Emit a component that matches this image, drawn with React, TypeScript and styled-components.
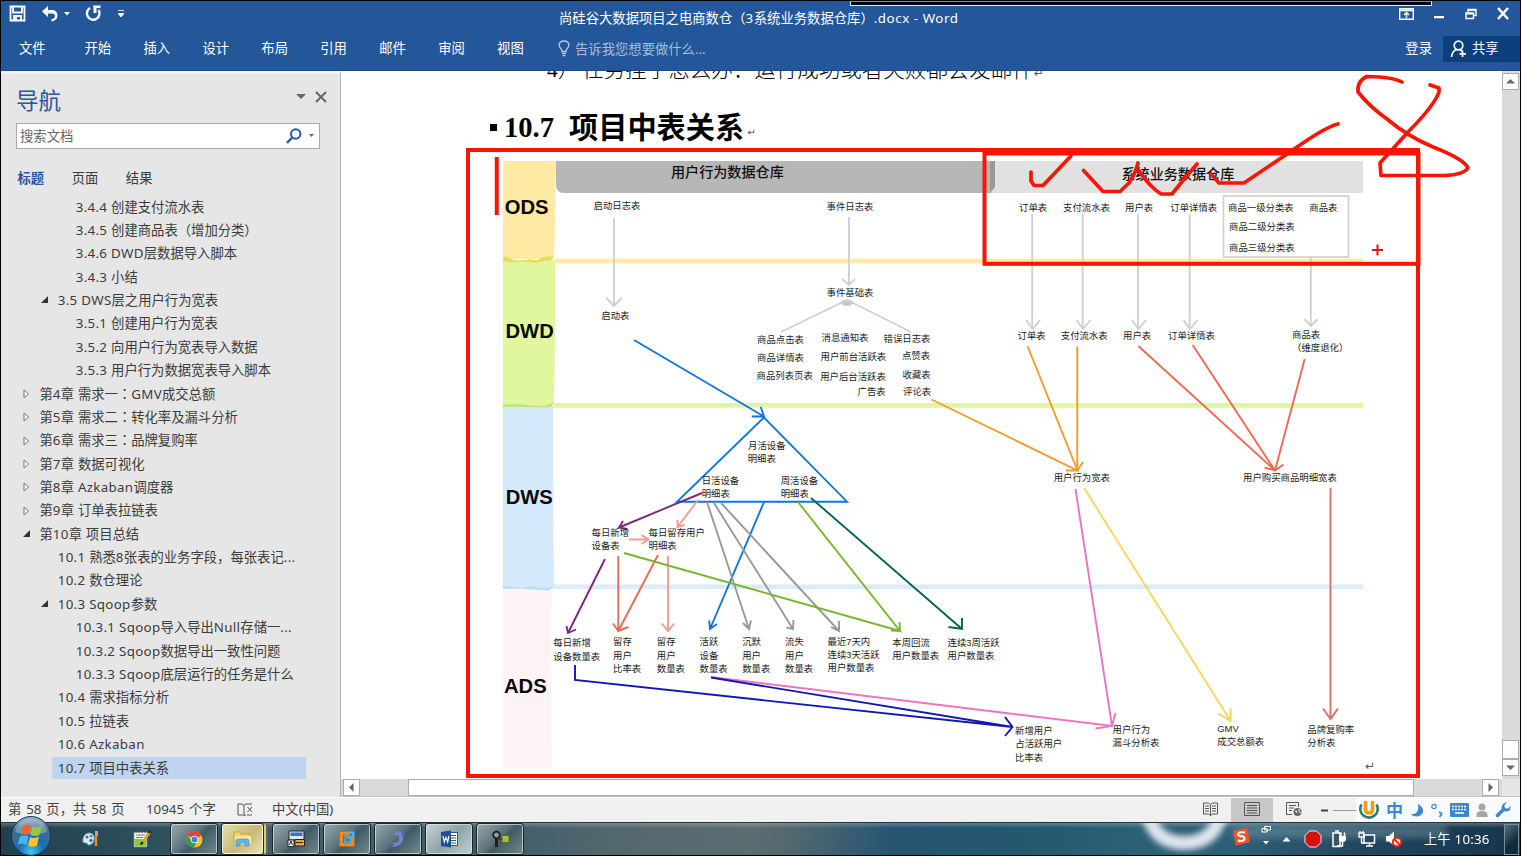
import React from "react";
import styled, { createGlobalStyle, css } from "styled-components";

const UI = `"Noto Sans", "Noto Sans CJK SC", sans-serif`;

const Global = createGlobalStyle`
  * { box-sizing: border-box; }
  body { margin: 0; overflow: hidden; background: #000; }
  svg { display: block; flex: none; }
`;

/* ---------- window ---------- */
const Screen = styled.div`
  width: 1521px;
  height: 856px;
  padding: 1px;
  background: #000;
  display: flex;
  flex-direction: column;
  font-family: ${UI};
  font-size: 13.33px;
  line-height: 20px;
  color: #3c3c3c;
  white-space: nowrap;
  overflow: hidden;
`;

const Header = styled.header`
  position: relative;
  height: 70px;
  flex: none;
  background: #245799;
  border-bottom: 1px solid #1d4a86;
  color: #fff;
`;

const TitleBar = styled.div`
  height: 34px;
  display: grid;
  grid-template-columns: 558px 1fr auto;
`;

const QuickAccess = styled.div`
  display: flex;
  align-items: center;
  height: 25px;
  padding-left: 8px;
`;

const Gap = styled.span<{ $w: number }>`
  display: inline-block;
  width: ${(p) => p.$w}px;
  flex: none;
`;

const DocTitle = styled.div`
  padding-top: 7px;
`;

const WindowButtons = styled.div`
  display: flex;
  align-items: center;
  height: 25px;
  padding-right: 10px;
`;

const ShareStrip = styled.div`
  position: absolute;
  left: 849px;
  top: 0;
  width: 582px;
  height: 5px;
  background: #05051a;
  border: 1px solid #e4ecf7;
  border-top-color: #6f8dbb;
`;

const Ribbon = styled.nav`
  display: flex;
  align-items: center;
  height: 27px;
  padding-left: 18px;
`;

const RibbonTab = styled.span<{ $first?: boolean }>`
  width: ${(p) => (p.$first ? 65.5 : 58.95)}px;
  flex: none;
  padding-bottom: 1px;
`;

const TellMe = styled.span`
  display: flex;
  align-items: center;
  gap: 5px;
  color: #a3bbde;
  margin-left: 2px;
  flex: 1;
`;

const SignIn = styled.span`
  padding-bottom: 1px;
`;

const Share = styled.span`
  display: flex;
  align-items: center;
  gap: 4px;
  width: 77px;
  height: 26px;
  margin-left: 11px;
  padding-left: 7px;
  background: #0c3f7c;
`;

/* ---------- body ---------- */
const Body = styled.div`
  display: flex;
  height: 726px;
  flex: none;
  background: #fff;
`;

const NavPane = styled.aside`
  width: 340px;
  flex: none;
  background: #e6e6e6;
  border-top: 3px solid #f1f2f5;
  border-right: 1px solid #b4b4b4;
`;

const NavHead = styled.div`
  display: flex;
  align-items: center;
  height: 50px;
  padding: 4px 13px 0 15px;
`;

const NavTitle = styled.h2`
  margin: 0;
  flex: 1;
  font-size: 22.5px;
  font-weight: 400;
  line-height: 30px;
  color: #2b579a;
`;

const SearchBox = styled.div`
  display: flex;
  align-items: center;
  width: 304px;
  height: 26px;
  margin: -1px 0 0 15px;
  padding: 0 5px 0 3px;
  border: 1px solid #ababab;
  background: #fff;
  color: #666;
`;

const SearchText = styled.span`
  flex: 1;
`;

const NavTabs = styled.div`
  display: flex;
  gap: 27.5px;
  height: 46px;
  padding: 19px 0 0 16.5px;
`;

const NavTab = styled.span<{ $on?: boolean }>`
  font-weight: ${(p) => (p.$on ? 700 : 400)};
  color: ${(p) => (p.$on ? "#2b579a" : "#3c3c3c")};
`;

const Outline = styled.ul`
  margin: 0;
  padding: 0;
  list-style: none;
`;

const OutlineRow = styled.li<{ $level: number; $on?: boolean }>`
  display: flex;
  align-items: center;
  width: 254px;
  height: 23.36px;
  margin-left: 51px;
  line-height: 22px;
  padding-left: ${(p) => [0, 5.7, 23.7][p.$level - 1]}px;
  ${(p) => p.$level === 1 && "margin-left: 38.5px;"}
  ${(p) =>
    p.$on &&
    css`
      background: #bfd4f0;
      height: 22px;
      margin-top: 1px;
    `}
  position: relative;
`;

const Marker = styled.svg<{ $level: number }>`
  position: absolute;
  left: ${(p) => (p.$level === 1 ? -18 : -12)}px;
  top: 7px;
`;

const WideColon = styled.span`
  font-family: "Noto Sans CJK TC", sans-serif;
`;

const LatinRun = styled.span<{ $track: number }>`
  letter-spacing: ${(p) => p.$track}px;
`;

const Main = styled.main`
  flex: 1;
  display: grid;
  grid-template-columns: 1161px 18px;
  grid-template-rows: 708px 18px;
`;

const Doc = styled.article`
  position: relative;
  overflow: hidden;
  color: #000;
`;

const CutLine = styled.p`
  margin: -16px 0 0;
  padding-left: 206px;
  height: 56px;
  font: 300 21.5px/30px "Liberation Serif", "Noto Sans CJK SC", serif;
`;

const Return = styled.span<{ $size: number; $drop?: number }>`
  font: 400 ${(p) => p.$size}px "DejaVu Sans", sans-serif;
  color: #555;
  padding-top: ${(p) => p.$drop ?? 0}px;
`;

const Heading = styled.h1`
  display: flex;
  align-items: center;
  height: 40px;
  margin: 0;
  padding: 0 0 7px 149px;
  font: 700 28.6px/36px "Liberation Serif", "Noto Sans CJK SC", serif;
`;

const Bullet = styled.i`
  width: 7px;
  height: 7px;
  margin-right: 7px;
  background: #000;
`;

const HeadingText = styled.span`
  margin: 0 3px 0 15px;
  font-size: 29.2px;
`;

const Ink = styled.svg`
  position: absolute;
  left: 0;
  top: 0;
`;

const VScroll = styled.div`
  display: flex;
  flex-direction: column;
  background: #dadada;
  padding: 2px 1px 3px 0;
`;

const HScroll = styled.div`
  display: flex;
  background: #dadada;
  padding: 0 3px 0 2px;
  border-bottom: 1px solid #c4c4c4;
`;

const ScrollButton = styled.span`
  display: flex;
  align-items: center;
  justify-content: center;
  width: 17px;
  height: 17px;
  flex: none;
  background: #fff;
  border: 1px solid #ababab;
`;

const Spacer = styled.span`
  flex: 1;
`;

const VThumb = styled.span`
  height: 19px;
  width: 17px;
  background: #fff;
  border: 1px solid #ababab;
`;

const HThumb = styled.span`
  width: 1006px;
  height: 17px;
  margin: 0 68px 0 48px;
  background: #fff;
  border: 1px solid #ababab;
`;

const Corner = styled.div`
  background: #e6e6e6;
  border-bottom: 1px solid #c4c4c4;
`;

/* ---------- status bar ---------- */
const Status = styled.footer`
  display: flex;
  align-items: center;
  height: 25px;
  flex: none;
  padding-left: 7px;
  background: #f0f0f0;
  border-top: 1px solid #fff;
  color: #444;
`;

const StatusText = styled.span<{ $w: number; $space?: number }>`
  width: ${(p) => p.$w}px;
  flex: none;
  padding-bottom: 2px;
  word-spacing: ${(p) => p.$space ?? 0}px;
`;

const ViewButton = styled.span<{ $on?: boolean }>`
  display: flex;
  align-items: center;
  justify-content: center;
  width: 42px;
  height: 24px;
  padding-bottom: 2px;
  background: ${(p) => (p.$on ? "#c8c8c8" : "transparent")};
`;

const ZoomTrack = styled.span`
  width: 23px;
  height: 1px;
  margin-left: 5px;
  background: #999;
`;

const ImeBar = styled.span`
  display: flex;
  align-items: center;
  justify-content: space-between;
  width: 164px;
  height: 24px;
  padding: 0 9px 0 3px;
  background: #f8fafd;
`;

const ImeChar = styled.span`
  font: 700 17px/22px "Noto Sans CJK SC", sans-serif;
  color: #3d86d0;
`;

/* ---------- taskbar ---------- */
const Taskbar = styled.div`
  position: relative;
  display: flex;
  align-items: center;
  flex: 1;
  border-top: 1px solid #26333d;
  background: linear-gradient(180deg, rgba(255, 255, 255, 0.25), rgba(255, 255, 255, 0) 5px),
    linear-gradient(100deg, #21414f 0, #2f505d 160px, #46606a 330px, #3d5c68 480px, #52676e 600px, #5c6d72 740px, #4f666f 790px, #265572 880px, #24586f 1010px, #2c6075 1120px, #2d5f76 1230px, #234a63 1330px, #1b3c54 1430px, #173449 1519px);
`;

const Orb = styled.svg`
  position: absolute;
  left: 9px;
  top: -7px;
`;

const Launch = styled.span<{ $x: number }>`
  margin-left: ${(p) => p.$x}px;
`;

const TaskButtons = styled.div`
  display: flex;
  gap: 3px;
  margin-left: 18px;
`;

const TaskButton = styled.span<{ $tone?: "folder" | "active" }>`
  display: flex;
  align-items: center;
  justify-content: center;
  width: 48px;
  height: 32px;
  border: 1px solid #18262e;
  border-radius: 3px;
  box-shadow: inset 0 0 0 1px rgba(225, 238, 240, 0.65);
  background: ${(p) =>
    p.$tone === "folder"
      ? "linear-gradient(135deg,#e6dfae,#c9b877 55%,#f1e9b4)"
      : p.$tone === "active"
      ? "linear-gradient(135deg,#c9d3d6,#8ea3a8 50%,#c2d0d0)"
      : "linear-gradient(135deg,#9aa9ad,#5b737b 45%,#3f5b64 55%,#738b91)"};
  ${(p) =>
    p.$tone === "folder" &&
    css`
      width: 43px;
      margin-right: 5px;
      box-shadow: inset 0 0 0 1px #fbf7d4, 3px 0 0 -1px #d8ce94, 5px 0 0 -1px #6d6a48;
    `}
`;

const Glow = styled.svg`
  position: absolute;
  left: 1130px;
  top: 0;
`;

const Tray = styled.div`
  position: relative;
  display: flex;
  align-items: center;
  margin-left: auto;
  height: 100%;
  color: #fff;
`;

const Clock = styled.span`
  width: 67px;
  margin: 0 13px 0 22px;
`;

const ShowDesktop = styled.span`
  width: 15px;
  height: 31px;
  margin-right: 1px;
  border: 1px solid #7690a0;
  background: linear-gradient(135deg, #53707f, #122b3c 60%);
`;

/* ---------- data ---------- */
type Row = [level: number, text: string, marker?: "open" | "closed"];
const rows: Row[] = [
  [3, "3.4.4 创建支付流水表"],
  [3, "3.4.5 创建商品表（增加分类）"],
  [3, "3.4.6 DWD层数据导入脚本"],
  [3, "3.4.3 小结"],
  [2, "3.5 DWS层之用户行为宽表", "open"],
  [3, "3.5.1 创建用户行为宽表"],
  [3, "3.5.2 向用户行为宽表导入数据"],
  [3, "3.5.3 用户行为数据宽表导入脚本"],
  [1, "第4章 需求一：GMV成交总额", "closed"],
  [1, "第5章 需求二：转化率及漏斗分析", "closed"],
  [1, "第6章 需求三：品牌复购率", "closed"],
  [1, "第7章 数据可视化", "closed"],
  [1, "第8章 Azkaban调度器", "closed"],
  [1, "第9章 订单表拉链表", "closed"],
  [1, "第10章 项目总结", "open"],
  [2, "10.1 熟悉8张表的业务字段，每张表记..."],
  [2, "10.2 数仓理论"],
  [2, "10.3 Sqoop参数", "open"],
  [3, "10.3.1 Sqoop导入导出Null存储一..."],
  [3, "10.3.2 Sqoop数据导出一致性问题"],
  [3, "10.3.3 Sqoop底层运行的任务是什么"],
  [2, "10.4 需求指标分析"],
  [2, "10.5 拉链表"],
  [2, "10.6 Azkaban"],
  [2, "10.7 项目中表关系"],
];

type Label = [x: number, centerY: number, text: string];
const labels: Label[] = [
  [593.5, 206, "启动日志表"], [826.5, 207.3, "事件日志表"], [601.3, 315.8, "启动表"], [826.5, 292.5, "事件基础表"],
  [757, 339.5, "商品点击表"], [821.5, 338.3, "消息通知表"], [883.5, 338.5, "错误日志表"],
  [757, 357.5, "商品详情表"], [820.5, 356.8, "用户前台活跃表"], [902, 356, "点赞表"],
  [756.5, 376.3, "商品列表页表"], [820.2, 376.5, "用户后台活跃表"], [902.5, 374.7, "收藏表"],
  [857.5, 392, "广告表"], [903, 392, "评论表"],
  [1019, 207.5, "订单表"], [1063, 208, "支付流水表"], [1125, 208, "用户表"], [1170.3, 208, "订单详情表"],
  [1228, 207.8, "商品一级分类表"], [1309.3, 207.5, "商品表"], [1229, 227.2, "商品二级分类表"], [1229, 247.6, "商品三级分类表"],
  [1017.5, 335.7, "订单表"], [1060.8, 336.3, "支付流水表"], [1123, 336.3, "用户表"], [1168, 336.3, "订单详情表"],
  [1292, 334.6, "商品表"], [1292, 347.8, "（维度退化）"],
  [1053.7, 478.3, "用户行为宽表"], [1243, 478.3, "用户购买商品明细宽表"],
  [748, 445.5, "月活设备"], [747.7, 458.8, "明细表"], [701.7, 481.2, "日活设备"], [701.7, 494.3, "明细表"],
  [780.7, 481.2, "周活设备"], [780.7, 494.3, "明细表"],
  [591.5, 533, "每日新增"], [591.5, 546.3, "设备表"], [648.5, 532.5, "每日留存用户"], [648.5, 545.7, "明细表"],
  [553.3, 643, "每日新增"], [553.3, 656.6, "设备数量表"],
  [613, 642.3, "留存"], [613, 655.5, "用户"], [613, 668.8, "比率表"],
  [656.8, 642.3, "留存"], [656.8, 655.5, "用户"], [656.8, 668.8, "数量表"],
  [699.5, 642.3, "活跃"], [699.5, 655.5, "设备"], [699.5, 668.8, "数量表"],
  [742.2, 642.3, "沉默"], [742.2, 655.5, "用户"], [742.2, 668.8, "数量表"],
  [785, 642.3, "流失"], [785, 655.5, "用户"], [785, 668.8, "数量表"],
  [827.5, 641.5, "最近7天内"], [827.5, 654.8, "连续3天活跃"], [827.5, 668, "用户数量表"],
  [892.3, 642.5, "本周回流"], [892.3, 655.8, "用户数量表"],
  [947.5, 642.7, "连续3周活跃"], [947.5, 656, "用户数量表"],
  [1015, 730.7, "新增用户"], [1015.3, 744, "占活跃用户"], [1015, 757.5, "比率表"],
  [1112.6, 729.5, "用户行为"], [1112.6, 742.5, "漏斗分析表"],
  [1217.3, 729.2, "GMV"], [1217.3, 741.5, "成交总额表"],
  [1307.3, 729.7, "品牌复购率"], [1307.3, 743, "分析表"],
];

type Stroke = [color: string, d: string];
const strokes: Stroke[] = [
  ["#d0d0d0", "M614 218V306M606 297.500L614 306L621.500 298"],
  ["#d0d0d0", "M849 217V285M842 279L849 285L855 279"],
  ["#d0d0d0", "M781 332L847 300L911 332"],
  ["#d0d0d0", "M1032.200 214V329M1026 320L1032.500 329L1040 320"],
  ["#d0d0d0", "M1082.700 214V329M1076.500 320L1083 329L1090.500 320"],
  ["#d0d0d0", "M1138 214V329M1132 320L1138.500 329L1146 320"],
  ["#d0d0d0", "M1189.700 214V329M1183.500 320L1190 329L1197.500 320"],
  ["#d0d0d0", "M1310.800 257V326M1304.500 319L1310.800 326L1317.500 319"],
  ["#0f76de", "M634 340L764 416.500M760.700 407L764 416.500L751.700 416.500M764 417.500L677 501.700H847Z"],
  ["#0f76de", "M764 502L710 629M709.200 620.500L710 629L717 624"],
  ["#999999", "M707 502L749 629M743 623L749 629L751 620.500"],
  ["#999999", "M714 503L793 629M786.500 627.500L793 629L793.500 620"],
  ["#999999", "M721 503L839 631M831 627L839 631V621"],
  ["#7a2a82", "M702 493L619 527.500M623 521L619 527.500L627 529"],
  ["#7a2a82", "M605 559L568 633M566.500 626L568 633L576 629.500"],
  ["#f39c92", "M698 500L677.500 527M677.500 520L677.500 527L684.500 525"],
  ["#f39c92", "M629 539.500H648M641.500 535L648.500 539.500L641.500 544"],
  ["#f39c92", "M668 556V631M661.700 623.500L668 631L674.300 623.500"],
  ["#ea6a57", "M618.300 556V631L658 555M613 623.500L618.300 631L628.500 627"],
  ["#78b62c", "M624 553L900 631L798 502M891 630.500L900 631L899.500 622"],
  ["#05654f", "M811 498L962 629M948.500 627L962 629V618"],
  ["#ec74c0", "M711 677L1112 726L1075.500 489M1115.500 713L1112 726L1095.500 728.500"],
  ["#1018b0", "M575 665V680L1012.500 727L711 677.500M1005 717L1012.500 727L1005 736"],
  ["#f6d65c", "M1084 488L1230.700 721M1218 713.500L1230.700 721L1230.500 708"],
  ["#e0705f", "M1330.500 488V719M1323 708.500L1330.500 719L1338 708.500"],
  ["#ef9c2c", "M931.500 399.500L1077.500 470.500L1027.500 346M1077.300 346.500V470.500M1066 470.500H1077.500L1083 462"],
  ["#ee6a55", "M1138.300 346L1275 470.500L1192.700 345M1304.700 359L1275 470.500M1264.500 467.500L1275 470.500L1283.500 464.500"],
];

function Diagram() {
  return (
    <svg width="1161" height="628" viewBox="341 151 1161 628" style={{ fontFamily: `"Liberation Sans", "Noto Sans CJK SC", sans-serif` }}>
      <path d="M503 590H553L551 610L552 768H503Z" fill="#fdf3f5" />
      <path d="M503 406H553L553 470L554 587Q552 590 545 590L536 588L520 589L503 586Z" fill="#d6eafe" />
      <path d="M503 260H555L555 340L554 403Q552 407 545 406L530 406L503 407Z" fill="#e1f79e" />
      <path d="M503 161H556L555 222L554 259H503Z" fill="#feeaa2" />
      <path d="M503 256.500Q508 256 512 259.500Q520 262 530 259Q536 262 541 258Q548 255 553 257.500Q553 261 546 261L535 263Q520 261 512 262.500Q504 262 503 261Z" fill="#e8dc5e" />
      <path d="M503 404.500Q520 403 530 405.500L545 406L554 402Q553 408 545 407.500L530 407H503Z" fill="#c4e37c" />
      <path d="M503 585L520 588L532 586L545 588L554 586L549 590.500L520 589H503Z" fill="#c2dcf7" />
      <rect x="555" y="258.700" width="808" height="4.700" fill="#feeaa2" />
      <rect x="554" y="403" width="809" height="4.700" fill="#e1f79e" />
      <rect x="553" y="584.500" width="810" height="4.500" fill="#d9ebfc" />
      <rect x="988" y="161" width="375" height="32" fill="#e1e1e1" />
      <path d="M556 161H991V193H564Q556 193 556 184Z" fill="#b7b7b7" />
      <path d="M990 161H995V187L990 193Z" fill="#999" />
      <rect x="1223.500" y="196" width="125" height="61" fill="none" stroke="#d0d0d0" strokeWidth="1.700" />
      <path d="M841 301L847 299L853 301Q853 306 847 306Q841 306 841 301Z" fill="#c8c8c8" />
      {strokes.map(([color, d], i) => (
        <path key={i} d={d} fill="none" stroke={color} strokeWidth="1.900" />
      ))}
      {labels.map(([x, cy, text], i) => (
        <text key={i} x={x} y={cy + 3} fontSize="9.400" fill="#1c1c1c">{text}</text>
      ))}
      <g fontSize="14.100" fontWeight="500" fill="#111">
        <text x="671" y="177.300">用户行为数据仓库</text>
        <text x="1121.500" y="179.300">系统业务数据仓库</text>
      </g>
      <g fontSize="20.200" fontWeight="700" fill="#0a0a0a">
        <text x="504.800" y="213.600">ODS</text>
        <text x="505.500" y="337.600">DWD</text>
        <text x="505.700" y="503.600">DWS</text>
        <text x="504" y="693">ADS</text>
      </g>
      <text x="1365" y="769.500" fontSize="12" fill="#555" fontFamily="DejaVu Sans">↵</text>
    </svg>
  );
}

function Annotations() {
  return (
    <Ink width="1161" height="708" viewBox="341 71 1161 708" fill="none" stroke="#f71604" strokeWidth="4">
      <rect x="468" y="150" width="950" height="626" />
      <rect x="984.500" y="153.500" width="434" height="110.300" />
      <path d="M496.800 157V215" />
      <g strokeLinecap="round" strokeLinejoin="round" strokeWidth="3.700">
        <path d="M1031 172V181L1034 185.500H1043L1071 156" />
        <path d="M1083.500 170.500L1103 191.500H1120L1129 183Q1136 172 1138 163" />
        <path d="M1139 171Q1150 187 1161 194H1172L1185 178L1197 164" />
        <path d="M1211 174L1219 183H1244L1290 152Q1325 127 1338 124" />
        <path d="M1402 82Q1393 77 1367 76.500Q1357 81 1358 92Q1370 107 1387 119Q1407 136 1433 147Q1464 159 1468 168Q1463 175 1444 175.500H1381L1380 163L1408 132Q1434 106 1439 92V88L1430 85" />
      </g>
      <path d="M1372 250H1383M1377.500 244.500V255.500" stroke="#d41c14" strokeWidth="2" />
    </Ink>
  );
}

/* Mixed Chinese/Latin text: Latin runs are tracked slightly wider. */
function Mixed({ text, track = 0.32 }: { text: string; track?: number }) {
  return (
    <span>
      {text.split(/([A-Za-z0-9. \-]+|：)/).map((part, i) =>
        part === "：" ? (
          <WideColon key={i}>{part}</WideColon>
        ) : i % 2 ? (
          <LatinRun key={i} $track={track}>{part}</LatinRun>
        ) : (
          part
        )
      )}
    </span>
  );
}

const Arrow = ({ d }: { d: string }) => (
  <svg width="9" height="9" viewBox="0 0 9 9"><path d={d} fill="#666" /></svg>
);

export default function App() {
  return (
    <Screen>
      <Global />
      <Header>
        <TitleBar>
          <QuickAccess>
            <svg width="17" height="17" viewBox="0 0 17 17"><path d="M1.500 1.500H15.500V15.500H1.500ZM4 1.500V7.500H13V1.500M5 15.500V11H12V15.500M7 12V15" fill="none" stroke="#fff" strokeWidth="1.800" /></svg>
            <Gap $w={15} />
            <svg width="17" height="16" viewBox="0 0 17 16"><path d="M7 0L1 5.500L7 11V7.500H11Q14 7.500 14 10Q14 12.500 10 13.500L11 15.500Q16.500 14 16.500 9.500Q16 4 11 4H7Z" fill="#fff" /></svg>
            <Gap $w={6} />
            <svg width="6" height="4"><path d="M0 0H6L3 3.500Z" fill="#fff" /></svg>
            <Gap $w={15} />
            <svg width="17" height="17" viewBox="0 0 17 17"><path d="M5 3A6.300 6.300 0 1 0 13.500 5" fill="none" stroke="#fff" strokeWidth="2.400" /><path d="M8 0.500H15.500V3H11.500V8H8.500V2.500Z" fill="#fff" /></svg>
            <Gap $w={16} />
            <svg width="6" height="8"><path d="M0 .5H6M0 3.500H6L3 7Z" fill="#fff" stroke="#fff" strokeWidth=".8" /></svg>
          </QuickAccess>
          <DocTitle><Mixed track={0.55} text="尚硅谷大数据项目之电商数仓（3系统业务数据仓库）.docx - Word" /></DocTitle>
          <WindowButtons>
            <svg width="15" height="12" viewBox="0 0 15 12"><path d="M.7 .7H14.300V11.300H.7ZM.7 2.500H14.300M7.500 10V5M5 7L7.500 4.500L10 7" fill="none" stroke="#fff" strokeWidth="1.400" /></svg>
            <Gap $w={19} />
            <svg width="12" height="12"><rect x="1" y="8" width="10" height="2.300" fill="#fff" /></svg>
            <Gap $w={20} />
            <svg width="12" height="12" viewBox="0 0 12 12"><path d="M1 5H8.500V10.500H1ZM1 5.700H8.500M3 4V1.500H11V7.500H9M3 2.200H11" fill="none" stroke="#fff" strokeWidth="1.400" /></svg>
            <Gap $w={19} />
            <svg width="14" height="13" viewBox="0 0 14 13"><path d="M2 1L12 12M12 1L2 12" stroke="#fff" strokeWidth="2.600" /></svg>
          </WindowButtons>
        </TitleBar>
        <ShareStrip />
        <Ribbon>
          {["文件", "开始", "插入", "设计", "布局", "引用", "邮件", "审阅", "视图"].map((t, i) => (
            <RibbonTab key={t} $first={i === 0}>{t}</RibbonTab>
          ))}
          <TellMe>
            <svg width="12" height="17" viewBox="0 0 12 17"><path d="M4 11.500Q4 9.500 2.500 8Q1 6.500 1 5Q1.500 1 6 1Q10.500 1 11 5Q11 6.500 9.500 8Q8 9.500 8 11.500ZM4 13.300H8M4.500 15.500H7.500" fill="none" stroke="#b4c8e6" strokeWidth="1.300" /></svg>
            告诉我您想要做什么...
          </TellMe>
          <SignIn>登录</SignIn>
          <Share>
            <svg width="18" height="18" viewBox="0 0 18 18"><circle cx="8.500" cy="5.500" r="4.300" fill="none" stroke="#fff" strokeWidth="1.700" /><path d="M1.500 17Q2 11.500 6.500 9.500M10 9.500L12 11M12.500 10.500V17M9.500 13.800H16" fill="none" stroke="#fff" strokeWidth="1.700" /></svg>
            <SignIn>共享</SignIn>
          </Share>
        </Ribbon>
      </Header>

      <Body>
        <NavPane>
          <NavHead>
            <NavTitle>导航</NavTitle>
            <svg width="10" height="6" style={{ marginTop: -9 }}><path d="M0 0H10L5 5Z" fill="#666" /></svg>
            <Gap $w={9} />
            <svg width="12" height="12" viewBox="0 0 12 12" style={{ marginTop: -9 }}><path d="M1 1L11 11M11 1L1 11" stroke="#666" strokeWidth="2" /></svg>
          </NavHead>
          <SearchBox>
            <SearchText>搜索文档</SearchText>
            <svg width="16" height="16" viewBox="0 0 16 16"><circle cx="9.700" cy="6" r="4.700" fill="none" stroke="#2b579a" strokeWidth="2" /><path d="M6.200 9.500L1 15" stroke="#2b579a" strokeWidth="2.500" /></svg>
            <Gap $w={7} />
            <svg width="5" height="4"><path d="M0 0H5L2.500 3Z" fill="#666" /></svg>
          </SearchBox>
          <NavTabs>
            <NavTab $on>标题</NavTab>
            <NavTab>页面</NavTab>
            <NavTab>结果</NavTab>
          </NavTabs>
          <Outline>
            {rows.map(([level, text, marker], i) => (
              <OutlineRow key={text} $level={level} $on={i === rows.length - 1}>
                {marker && (
                  <Marker $level={level} width="9" height="10" viewBox="0 0 9 10">
                    {marker === "open" ? (
                      <path d="M8 1V8H1Z" fill="#333" />
                    ) : (
                      <path d="M2 1L6.500 5L2 9Z" fill="#fff" stroke="#777" />
                    )}
                  </Marker>
                )}
                <Mixed text={text} />
              </OutlineRow>
            ))}
          </Outline>
        </NavPane>

        <Main>
          <Doc>
            <CutLine>4）<Gap $w={3} />任务挂了怎么办：运行成功或者失败都会发邮件<Return $size={12}>↵</Return></CutLine>
            <Heading>
              <Bullet />10.7<HeadingText>项目中表关系</HeadingText><Return $size={10} $drop={9}>↵</Return>
            </Heading>
            <Diagram />
            <Annotations />
          </Doc>
          <VScroll>
            <ScrollButton><Arrow d="M0 6.500L4.500 2L9 6.500Z" /></ScrollButton>
            <Spacer />
            <VThumb />
            <ScrollButton><Arrow d="M0 2.500L4.500 7L9 2.500Z" /></ScrollButton>
          </VScroll>
          <HScroll>
            <ScrollButton><Arrow d="M6.500 0L2 4.500L6.500 9Z" /></ScrollButton>
            <HThumb />
            <ScrollButton><Arrow d="M2.500 0L7 4.500L2.500 9Z" /></ScrollButton>
          </HScroll>
          <Corner />
        </Main>
      </Body>

      <Status>
        <StatusText $w={138} $space={1.4}>第 58 页，共 58 页</StatusText>
        <StatusText $w={91} $space={1.5}>10945 个字</StatusText>
        <svg width="17" height="15" viewBox="0 0 17 15" style={{ marginTop: -2 }}><path d="M6 13H1V2H5L7 3.500V14L9 12.500M7 3.500L9 2H15M10.500 5L15 10M15 5L10.500 10M10 13H15" fill="none" stroke="#555" /></svg>
        <Gap $w={18} />
        <StatusText $w={100}>中文(中国)</StatusText>
        <Spacer />
        <ViewButton>
          <svg width="15" height="14" viewBox="0 0 15 14"><path d="M7.500 2.500V13.500M7.500 2.500L5.500 1H.5V12H5.500L7.500 13.500L9.500 12H14.500V1H9.500ZM2 4H6M2 6.500H6M2 9H6M9 4H13M9 6.500H13M9 9H13" fill="none" stroke="#555" /></svg>
        </ViewButton>
        <ViewButton $on>
          <svg width="16" height="14" viewBox="0 0 16 14"><path d="M.5 .5H15.500V13.500H.5ZM3 3.500H13M3 6H13M3 8.500H13M3 11H13" fill="none" stroke="#555" /></svg>
        </ViewButton>
        <ViewButton>
          <svg width="16" height="15" viewBox="0 0 16 15"><path d="M6 12.500H.5V.5H12.500V5M3 3.500H10M3 6H8M3 8.500H6" fill="none" stroke="#555" /><circle cx="11.500" cy="10" r="4" fill="#666" /><path d="M9 9Q11 8 11 11M13 7Q12 10 15 11" fill="none" stroke="#f0f0f0" /></svg>
        </ViewButton>
        <Gap $w={6} />
        <svg width="7" height="3"><rect width="7" height="2" y=".5" fill="#444" /></svg>
        <ZoomTrack />
        <ImeBar>
          <svg width="20" height="20" viewBox="0 0 20 20"><path d="M2.500 4.500A8.700 8.700 0 1 0 17.500 4.500" fill="none" stroke="#2e7d6e" strokeWidth="2.600" /><path d="M6.500 1V9.500Q6.500 13 10 13Q13.500 13 13.500 9.500V1" fill="none" stroke="#f19a20" strokeWidth="3.600" /></svg>
          <ImeChar>中</ImeChar>
          <svg width="14" height="15" viewBox="0 0 14 15"><path d="M8 1Q15 5 12.500 10.500Q8 16 .5 11.500Q10 11 8 1Z" fill="#3d86d0" /></svg>
          <svg width="12" height="15" viewBox="0 0 12 15"><circle cx="3" cy="3.500" r="2.200" fill="none" stroke="#3d86d0" strokeWidth="1.200" /><path d="M8 9.500Q11 9.500 10.500 11.500L8.500 14" stroke="#3d86d0" strokeWidth="1.800" fill="none" /></svg>
          <svg width="19" height="14" viewBox="0 0 19 14"><rect width="19" height="14" rx="1" fill="#3d86d0" /><path d="M2 3.500H17M2 6.500H17" stroke="#fff" strokeWidth="1.500" strokeDasharray="2 1" /><path d="M5 10H14" stroke="#fff" strokeWidth="1.500" /></svg>
          <svg width="12" height="15" viewBox="0 0 12 15"><circle cx="6" cy="4" r="3.500" fill="#a5a5a5" /><path d="M.5 14V11Q1 8 6 8Q11 8 11.500 11V14Z" fill="#a5a5a5" /></svg>
          <svg width="16" height="16" viewBox="0 0 16 16"><path d="M2.500 13.500L9 7" stroke="#3d86d0" strokeWidth="3.500" strokeLinecap="round" /><path d="M12 .5L9.500 3V5.500L11 6.500H13L15.500 4Q16 9 12 9.500Q7.500 10 6.500 6Q7 .5 12 .5Z" fill="#3d86d0" /></svg>
        </ImeBar>
      </Status>

      <Taskbar>
        <Glow width="389" height="33" viewBox="1131 822 389 33">
          <defs><filter id="soft" x="-20%" y="-40%" width="140%" height="180%"><feGaussianBlur stdDeviation="3" /></filter></defs>
          <g filter="url(#soft)">
            <path d="M1148 814Q1156 842 1184 842Q1213 842 1221 814" fill="none" stroke="#dfe5ee" strokeWidth="14" />
            <rect x="1232" y="824" width="215" height="13" fill="#7e98a5" opacity=".45" />
          </g>
        </Glow>
        <Orb width="42" height="40" viewBox="0 0 42 40">
          <defs>
            <radialGradient id="orb" cx=".5" cy=".9" r=".9"><stop offset="0" stopColor="#3ec4f5" /><stop offset=".35" stopColor="#1b6fae" /><stop offset=".75" stopColor="#3d6a8f" /><stop offset="1" stopColor="#9cbcd0" /></radialGradient>
          </defs>
          <circle cx="21" cy="20" r="19.500" fill="url(#orb)" stroke="#16384f" />
          <path d="M5 16Q9 3 21 3Q33 3 37 16Q21 21 5 16Z" fill="#fff" opacity=".3" />
          <path d="M13 10Q17 7.500 21 10L19 18.500Q15 16.500 10.500 19Z" fill="#f0652a" />
          <path d="M22.500 10.500Q27 12.500 32 10L29.500 19Q25 21 20.500 19Z" fill="#97c93c" />
          <path d="M10 20.500Q14.500 18 18.500 20.500L16.500 29Q12.500 26.500 7.500 29Z" fill="#4db3ec" />
          <path d="M20 21Q24.500 23 29 20.500L27 29.500Q22.500 32 18 29.500Z" fill="#fbc62b" />
        </Orb>
        <Launch $x={81}>
          <svg width="18" height="18" viewBox="0 0 18 18"><path d="M1 9Q2 3 8 3Q13 4 12 10Q11 15 6 15Q5 12 3 13Q0 13 1 9Z" fill="#d8eef8" stroke="#6aa6cc" /><circle cx="5" cy="7" r="1.500" fill="#d34" /><circle cx="9" cy="6" r="1.500" fill="#3a5" /><circle cx="9" cy="10.500" r="1.700" fill="#27b" /><path d="M14 6V16" stroke="#e38a2b" strokeWidth="2.500" /><path d="M13 1H16V6H13Z" fill="#c9a079" /></svg>
        </Launch>
        <Launch $x={33}>
          <svg width="19" height="18" viewBox="0 0 19 18"><path d="M1 2H14V17H1Z" fill="#f4f7ee" stroke="#888" strokeWidth=".7" /><path d="M1.500 9H13.500V16.500H1.500Z" fill="#8cc63c" /><path d="M3 5H12M3 7.500H10" stroke="#777" /><path d="M3 1V3M6 1V3M9 1V3M12 1V3" stroke="#333" /><path d="M17 2L9 13" stroke="#d9a520" strokeWidth="2.800" /><path d="M17.500 1L16 3M9.500 12L8 14.500" stroke="#222" strokeWidth="2.400" /></svg>
        </Launch>
        <TaskButtons>
          <TaskButton>
            <svg width="17" height="17" viewBox="0 0 17 17"><circle cx="8.500" cy="8.500" r="8" fill="#f5c51e" /><path d="M8.500 8.500L1.500 4.500A8 8 0 0 1 15.500 4.500Z" fill="#e04434" /><path d="M1.500 4.500A8 8 0 0 0 8 16.500L11 10L5.500 10Z" fill="#2e9f50" /><circle cx="8.500" cy="8.500" r="3.700" fill="#fff" /><circle cx="8.500" cy="8.500" r="2.900" fill="#3f7fe5" /></svg>
          </TaskButton>
          <TaskButton $tone="folder">
            <svg width="19" height="18" viewBox="0 0 19 18"><path d="M1 2H7L8 4H17V12H1Z" fill="#f3d670" stroke="#c8a23c" /><path d="M2 6H18V14H2Z" fill="#fbe9a0" /><path d="M3 16V11Q3 9 5 9H14Q16 9 16 11V16H12V13H7V16Z" fill="#62b4e8" stroke="#3f92ca" strokeWidth=".6" /></svg>
          </TaskButton>
          <TaskButton>
            <svg width="19" height="18" viewBox="0 0 19 18"><path d="M2 1H17V10H2Z" fill="#dfe8f4" stroke="#222" /><path d="M3.500 2.500H15.500V6H3.500Z" fill="#3f6fc4" /><path d="M8 9.500H17.500V16H8Z" fill="#f2a92a" stroke="#222" /><path d="M1 10H7V16.500H1Z" fill="#fff" stroke="#222" /><path d="M2.500 15L4 11L5.500 15M9 12.500H16" stroke="#222" fill="none" /></svg>
          </TaskButton>
          <TaskButton>
            <svg width="18" height="18" viewBox="0 0 18 18"><path d="M6 6.500V1.500H16.500V12H12" fill="none" stroke="#2d8fce" strokeWidth="0" /><path d="M1.500 1.500H12V5H5V12.500H8V16.500H1.500Z" fill="#f08a24" stroke="#b95c0c" strokeWidth=".5" /><path d="M8.500 5.500H16.500V16.500H8V13H12.500V9H8.500Z" fill="#f08a24" stroke="#b95c0c" strokeWidth=".5" /><path d="M6 5H13V13H6ZM8.300 7.300V10.700H10.700V7.300Z" fill="#3fa3dc" fillRule="evenodd" /><path d="M10 1.500H16.500V8H14V4H10Z" fill="#52b0e4" /></svg>
          </TaskButton>
          <TaskButton>
            <svg width="18" height="18" viewBox="0 0 18 18"><path d="M6 1Q14 0 14.500 7Q14.500 14 7 16.500L2.500 17L5 14.500L3 12Q7 14 9.500 11Q11 8 8.500 5L4 5Q3.500 3.500 6 3Z" fill="#7780cf" /><path d="M12 5L16 3L14.500 8Z" fill="#5f69ba" /></svg>
          </TaskButton>
          <TaskButton $tone="active">
            <svg width="19" height="18" viewBox="0 0 19 18"><rect x="9" y="2.500" width="8.500" height="13" fill="#fff" stroke="#2b579a" /><path d="M10.500 5.500H16M10.500 8H16M10.500 10.500H16M10.500 13H16" stroke="#2b579a" /><path d="M1 2L11 .5V17.500L1 16Z" fill="#1e4e96" /><path d="M3 6L4.300 12L6 7.500L7.700 12L9 6" fill="none" stroke="#fff" strokeWidth="1.200" /></svg>
          </TaskButton>
          <TaskButton>
            <svg width="19" height="18" viewBox="0 0 19 18"><circle cx="5.500" cy="5" r="3.300" fill="#999" stroke="#1c1c1c" strokeWidth="1.800" /><path d="M5.500 8V17" stroke="#1c1c1c" strokeWidth="3" /><path d="M8 9H11" stroke="#333" strokeWidth="2" /><rect x="11" y="5.500" width="7" height="7" fill="#a9bf34" stroke="#5c6a18" /></svg>
          </TaskButton>
        </TaskButtons>
        <Tray>
          <svg width="18" height="18" viewBox="0 0 18 18" style={{ marginTop: -5 }}><path d="M1 3L15 0L18 14L4 17.500Z" fill="#f0561d" /><path d="M13 4.500Q6 3.500 6 6.500Q6.500 8 9.500 8.200Q13 8.800 12.500 11Q11.500 14 6 12.500" fill="none" stroke="#fff" strokeWidth="2.200" /></svg>
          <Gap $w={11} />
          <svg width="10" height="28" viewBox="0 0 10 28"><path d="M3.500 1.500H9.500V5H3.500ZM1 3.500H6V7H1Z" fill="#4d6b7c" stroke="#fff" /><path d="M2 16H8L5 19.500Z" fill="#fff" /></svg>
          <Gap $w={11} />
          <svg width="9" height="6"><path d="M.5 5.500L4.500 1L8.500 5.500Z" fill="#fff" /></svg>
          <Gap $w={13} />
          <svg width="18" height="18" viewBox="0 0 18 18"><path d="M5.500 1H12.500L17 5.500V12.500L12.500 17H5.500L1 12.500V5.500Z" fill="#d4140c" stroke="#f7e8e6" /></svg>
          <Gap $w={9} />
          <svg width="17" height="18" viewBox="0 0 17 18"><path d="M2 3H9V16.500H2ZM4 1H7V3" fill="#3a5666" stroke="#fff" strokeWidth="1.500" /><path d="M8 6H15V10Q14 12 12 12Q8 12 8 9Z" fill="#fff" /><path d="M10 2.500V6M13.500 2.500V6M11.500 12V16H6" fill="none" stroke="#fff" strokeWidth="1.500" /></svg>
          <Gap $w={10} />
          <svg width="18" height="18" viewBox="0 0 18 18"><path d="M6 5H16.500V13H6ZM8 16H15M11.500 13V16" fill="#244b62" stroke="#fff" strokeWidth="1.500" /><path d="M1 3H6V7H1ZM2 1V3M5 1V3M3.500 7V13H7" fill="none" stroke="#fff" strokeWidth="1.300" /></svg>
          <Gap $w={9} />
          <svg width="17" height="18" viewBox="0 0 17 18"><path d="M1 6H4L9 1.500V15.500L4 11.500H1Z" fill="#fff" /><circle cx="12" cy="12" r="4.200" fill="#fff" stroke="#e02618" strokeWidth="1.900" /><path d="M9 9L15 15" stroke="#e02618" strokeWidth="1.800" /></svg>
          <Clock><Mixed text="上午 10:36" /></Clock>
          <ShowDesktop />
        </Tray>
      </Taskbar>
    </Screen>
  );
}
